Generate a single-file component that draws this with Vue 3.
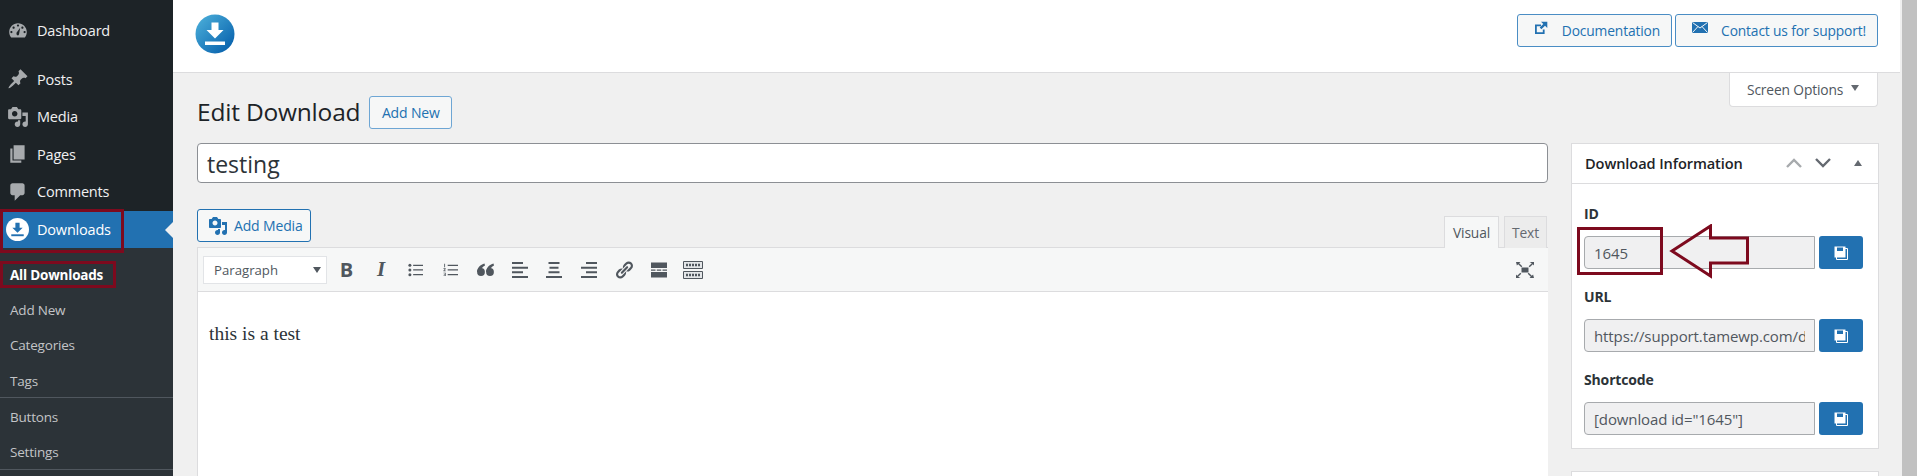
<script setup>
const topMenu = [
  { label: 'Posts', d: 'M10.44 3.02l1.82-1.82 6.36 6.35-1.83 1.82c-1.05-.68-2.48-.57-3.41.36l-.75.75c-.92.93-1.04 2.35-.35 3.41l-1.83 1.82-2.41-2.41-2.8 2.79c-.42.42-3.38 2.71-3.8 2.29s1.86-3.39 2.28-3.81l2.79-2.79L4.1 9.36l1.83-1.82c1.05.69 2.48.57 3.4-.36l.75-.75c.93-.92 1.05-2.35.36-3.41z' },
  { label: 'Media', d: 'M13 11V4c0-.55-.45-1-1-1h-1.67L9 1H5L3.67 3H2c-.55 0-1 .45-1 1v7c0 .55.45 1 1 1h10c.55 0 1-.45 1-1zM7 4.5c1.38 0 2.5 1.12 2.5 2.5S8.38 9.5 7 9.5 4.5 8.38 4.5 7 5.62 4.5 7 4.5zM14 6h5v10.5c0 1.38-1.12 2.5-2.5 2.5S14 17.88 14 16.5s1.12-2.5 2.5-2.5c.17 0 .34.02.5.05V9h-3V6zm-4 8.05V13h2v3.5c0 1.38-1.12 2.5-2.5 2.5S7 17.88 7 16.5 8.12 14 9.5 14c.17 0 .34.02.5.05z' },
  { label: 'Pages', d: 'M6 15V2h10v13H6zm-1 1h8v2H3V5h2v11z' },
  { label: 'Comments', d: 'M5 2h9c1.1 0 2 .9 2 2v7c0 1.1-.9 2-2 2h-2l-5 5v-5H5c-1.1 0-2-.9-2-2V4c0-1.1.9-2 2-2z' },
]
const dash = 'M3.76 16h12.48c1.1-1.37 1.76-3.11 1.76-5 0-4.42-3.58-8-8-8s-8 3.58-8 8c0 1.89.66 3.63 1.76 5zM10 4c.55 0 1 .45 1 1s-.45 1-1 1-1-.45-1-1 .45-1 1-1zM6 6c.55 0 1 .45 1 1s-.45 1-1 1-1-.45-1-1 .45-1 1-1zm8 0c.55 0 1 .45 1 1s-.45 1-1 1-1-.45-1-1 .45-1 1-1zm-5.37 5.55L12 7l-.97 5.55c0 .57-.46 1.45-1.03 1.45s-1.66-.43-1.37-2.45zM4 10c.55 0 1 .45 1 1s-.45 1-1 1-1-.45-1-1 .45-1 1-1zm12 0c.55 0 1 .45 1 1s-.45 1-1 1-1-.45-1-1 .45-1 1-1z'
const media = topMenu[1].d
const link = 'M17.74 2.76c1.68 1.69 1.68 4.41 0 6.1l-1.53 1.52c-1.12 1.12-2.7 1.47-4.14 1.09l2.62-2.61.76-.77.76-.76c.84-.84.84-2.2 0-3.04-.84-.85-2.2-.85-3.04 0l-.77.76-3.38 3.38c-.37-1.44-.02-3.02 1.1-4.14l1.52-1.53c1.69-1.68 4.42-1.68 6.1 0zM8.59 13.43l5.34-5.34c.42-.42.42-1.1 0-1.52-.44-.43-1.13-.39-1.53 0l-5.33 5.34c-.42.42-.42 1.1 0 1.52.44.43 1.13.39 1.52 0zm-.76 2.29l4.14-4.15c.38 1.44.03 3.02-1.09 4.14l-1.52 1.53c-1.69 1.68-4.41 1.68-6.1 0-1.68-1.68-1.68-4.42 0-6.1l1.53-1.52c1.12-1.12 2.7-1.47 4.14-1.1l-4.14 4.15c-.85.84-.85 2.2 0 3.05.84.84 2.2.84 3.04 0z'
const fields = [
  { label: 'ID', value: '1645' },
  { label: 'URL', value: 'https://support.tamewp.com/downloads/testing/' },
  { label: 'Shortcode', value: '[download id="1645"]' },
]
</script>

<template>
  <div class="root">
    <aside class="side">
      <a class="item first">
        <svg class="ico" viewBox="0 0 20 20"><path :d="dash" /></svg>Dashboard
      </a>
      <a v-for="m in topMenu" :key="m.label" class="item">
        <svg class="ico" viewBox="0 0 20 20"><path :d="m.d" /></svg>{{ m.label }}
      </a>
      <a class="item current">
        <svg class="ico" viewBox="0 0 24 24">
          <circle cx="12" cy="12" r="12" fill="#fff" />
          <path d="M9.8 5h4.4v5.2h3.2L12 15.4 6.6 10.2h3.2z" fill="#2271b1" />
          <path d="M5.5 17h13v2h-13z" fill="#2271b1" />
        </svg>Downloads
      </a>
      <div class="sub">
        <a class="subitem active">All Downloads</a>
        <a class="subitem">Add New</a>
        <a class="subitem">Categories</a>
        <a class="subitem">Tags</a>
        <div class="subline"></div>
        <a class="subitem">Buttons</a>
        <a class="subitem">Settings</a>
        <div class="subline"></div>
      </div>
      <div class="mark mark-dl"></div>
      <div class="mark mark-all"></div>
    </aside>

    <main class="main">
      <header class="top">
        <svg class="logo" viewBox="0 0 40 40">
          <defs>
            <linearGradient id="lg" x1="0" y1="0" x2="1" y2="1">
              <stop offset="0" stop-color="#4fb3dc" />
              <stop offset="1" stop-color="#0059a8" />
            </linearGradient>
          </defs>
          <circle cx="20" cy="20" r="19.5" fill="url(#lg)" />
          <path d="M16.5 8.5h7v7.5h5L20 24.5 11.5 16h5z" fill="#fff" />
          <path d="M10 27.5h20V31H10z" fill="#fff" />
        </svg>
        <div class="top-btns">
          <a class="btn top-btn doc">
            <svg class="top-ico" viewBox="0 0 14 14">
              <path d="M1 3.5h6v1.800H2.800v6h6V8.500h1.800V13H1z" fill="#2271b1" />
              <path d="M7 .7h6.300V7l-2.300-2.300-3.600 3.600-1.700-1.700 3.600-3.600z" fill="#2271b1" />
            </svg>
            Documentation
          </a>
          <a class="btn top-btn contact">
            <svg class="top-ico mail" viewBox="0 0 16 11">
              <path d="M0 0h16v11H0z" fill="#2271b1" />
              <path d="M.5.5 8 6l7.500-5.500M.5 10.500 6 4.500M15.500 10.500 10 4.500" fill="none" stroke="#f6f7f7" stroke-width="1" />
            </svg>
            Contact us for support!
          </a>
        </div>
      </header>
      <div class="screen-tab">Screen Options<i class="tri"></i></div>

      <div class="wrap">
        <div class="head-row">
          <h1 class="title">Edit Download</h1>
          <a class="btn add-new">Add New</a>
        </div>
        <div class="cols">
          <div class="left">
            <input class="title-input" value="testing" readonly />
            <div class="media-row">
              <a class="btn add-media">
                <svg class="media-ico" viewBox="0 0 20 20"><path :d="media" fill="#2271b1" /></svg>
                Add Media
              </a>
              <div class="tabs">
                <span class="tab on">Visual</span>
                <span class="tab">Text</span>
              </div>
            </div>
            <div class="editor">
              <div class="toolbar">
                <div class="select">Paragraph<i class="tri dark"></i></div>
                <span class="tb tb-b">B</span>
                <span class="tb tb-i">I</span>
                <span class="tb">
                  <svg viewBox="0 0 16 14" class="tbi"><circle cx="2" cy="2" r="1.6" /><circle cx="2" cy="7" r="1.6" /><circle cx="2" cy="12" r="1.6" /><path d="M5.500 1.300H16v1.300H5.500zM5.500 6.300H16v1.300H5.500zM5.500 11.300H16v1.300H5.500z" /></svg>
                </span>
                <span class="tb">
                  <svg viewBox="0 0 16 14" class="tbi"><path d="M1.300.4h.9v3.600h-.9zM.5 5h2.400v.8L1.500 7.500h1.400v.7H.5v-.8l1.400-1.600H.5zM.5 9.800h2.400v3.700H.5v-.7h1.500v-.8H.9v-.6h1.100v-.9H.5z" /><path d="M5 1.300h11v1.300H5zM5 6.300h11v1.300H5zM5 11.300h11v1.300H5z" /></svg>
                </span>
                <span class="tb">
                  <svg viewBox="0 0 17 13" class="tbi quote"><circle cx="4" cy="9" r="3.9" /><circle cx="13" cy="9" r="3.9" /><path d="M7.500.6C3.500 1.600.1 5 .1 9h3.400c0-2.500 1.600-5 4.500-6.500zM16.500.6C12.500 1.600 9.100 5 9.100 9h3.400c0-2.500 1.600-5 4.500-6.500z" /></svg>
                </span>
                <span class="tb">
                  <svg viewBox="0 0 16 16" class="tbi sq"><path d="M0 0h11v2H0zM0 4.700h16v2H0zM0 9.300h11v2H0zM0 14h16v2H0z" /></svg>
                </span>
                <span class="tb">
                  <svg viewBox="0 0 16 16" class="tbi sq"><path d="M2.500 0h11v2h-11zM2.500 9.300h11v2h-11zM3.500 4.700h9v2h-9zM0 14h16v2H0z" /></svg>
                </span>
                <span class="tb">
                  <svg viewBox="0 0 16 16" class="tbi sq"><path d="M5 0h11v2H5zM0 4.700h16v2H0zM5 9.300h11v2H5zM0 14h16v2H0z" /></svg>
                </span>
                <span class="tb">
                  <svg viewBox="0 0 20 20" class="tbi big"><path :d="link" /></svg>
                </span>
                <span class="tb">
                  <svg viewBox="0 0 16 15" class="tbi sq"><path d="M0 0h16v5.500H0zM0 6.900h4.500v1.300H0zM5.800 6.900h4.400v1.300H5.800zM11.500 6.900H16v1.300h-4.500zM0 9.500h16V15H0z" /></svg>
                </span>
                <span class="tb">
                  <svg viewBox="0 0 20 18" class="tbi wide">
                    <path d="M.5.500h19v7h-19zM.5 10.500h19v7h-19z" fill="#e3e6e8" stroke="#50575e" />
                    <path d="M3 4h14M3 14h14" fill="none" stroke="#50575e" stroke-width="2.500" stroke-dasharray="2 1" />
                  </svg>
                </span>
                <span class="tb tb-full">
                  <svg viewBox="0 0 18 16" class="tbi full">
                    <path d="M5.500 5.500h7v5h-7z" />
                    <path d="M0 0h4.500L3.200 1.300 6.300 4.300 5.300 5.200 2.200 2.200 .9 3.500zM18 0v3.500L16.800 2.200 13.700 5.200 12.700 4.300 15.800 1.300 13.500 0zM0 16v-3.500L1.200 13.800 4.300 10.800 5.300 11.700 2.200 14.700 4.500 16zM18 16h-4.500l1.300-1.300-3.100-3 1-.9 3.100 3 1.300-1.300z" />
                  </svg>
                </span>
              </div>
              <div class="content">this is a test</div>
            </div>
          </div>

          <div class="right">
            <section class="panel">
              <div class="panel-head">
                <span class="panel-title">Download Information</span>
                <svg class="chev" viewBox="0 0 16 10"><path d="M1 9l7-7 7 7" fill="none" stroke="#a7aaad" stroke-width="2.4" /></svg>
                <svg class="chev two" viewBox="0 0 16 10"><path d="M1 1l7 7 7-7" fill="none" stroke="#646970" stroke-width="2.4" /></svg>
                <i class="tri up"></i>
              </div>
              <div class="panel-body">
                <div v-for="f in fields" :key="f.label" class="field">
                  <label class="flabel">{{ f.label }}</label>
                  <div class="frow">
                    <input class="finput" :value="f.value" readonly />
                    <button class="save">
                      <svg viewBox="0 0 14 14" class="save-ico">
                        <path d="M2.500 2.500h11v11h-11z" fill="#2271b1" stroke="#fff" stroke-width="1" />
                        <path d="M.5.500h11v11H.5z" fill="#fff" />
                        <path d="M3 1.500h6v3.500H3z" fill="#2271b1" />
                      </svg>
                    </button>
                  </div>
                </div>
              </div>
            </section>
            <section class="panel next"></section>
          </div>
        </div>
      </div>

      <div class="mark mark-id"></div>
      <svg class="arrow" viewBox="0 0 84 56">
        <path d="M3 27 41.500 2v12h37v25h-37v13z" fill="none" stroke="#7d0a1e" stroke-width="3" />
      </svg>
    </main>

    <div class="gap"></div>
    <div class="scrollbar"></div>
  </div>
</template>

<style>
html, body { margin: 0; background: #f0f0f0; overflow: hidden; }
</style>

<style scoped>
.root {
  display: flex;
  width: 1917px;
  height: 476px;
  overflow: hidden;
  background: #f0f0f0;
  font-family: "Open Sans", "Noto Sans", sans-serif;
  color: #1d2327;
}
.side {
  position: relative;
  flex: 0 0 173px;
  background: #1d2327;
  padding-top: 12px;
  box-sizing: border-box;
}
.item {
  display: flex;
  align-items: center;
  height: 37.5px;
  padding-left: 7px;
  color: #f0f0f1;
  font-size: 14.5px;
  letter-spacing: -0.2px;
  position: relative;
}
.item.first { margin-bottom: 11px; }
.ico {
  width: 22px;
  height: 22px;
  margin-right: 8px;
  fill: #a7aaad;
  flex: none;
}
.item.current { background: #2271b1; color: #fff; padding-left: 6px; }
.item.current .ico { width: 23px; height: 23px; margin-right: 8px; }
.item.current::after {
  content: "";
  position: absolute;
  right: 0;
  top: 11px;
  border: 8px solid transparent;
  border-right-color: #f0f0f0;
  border-left-width: 0;
}
.sub {
  background: #2c3338;
  padding-top: 9.5px;
  height: 228px;
  box-sizing: border-box;
}
.subitem {
  display: flex;
  align-items: center;
  height: 35.2px;
  padding-left: 10px;
  color: #c3c4c7;
  font-size: 13.5px;
  letter-spacing: -0.2px;
}
.subitem.active { color: #fff; font-weight: 700; }
.subline { height: 1px; background: #50575e; margin-top: -1px; margin-bottom: 1px; }
.mark { position: absolute; box-sizing: border-box; border: 3px solid #7d0a1e; pointer-events: none; }
.mark-dl { left: 0; top: 209px; width: 124px; height: 44px; }
.mark-all { left: 0; top: 261px; width: 116px; height: 27px; }

.main { position: relative; flex: 0 0 1727px; min-width: 0; }
.top {
  display: flex;
  align-items: flex-start;
  justify-content: space-between;
  background: #fff;
  border-bottom: 1px solid #dcdcde;
  padding: 14px 22px 0 22px;
  box-sizing: border-box;
  height: 73px;
}
.logo { width: 40px; height: 40px; }
.top-btns { display: flex; gap: 3px; }
.btn {
  display: inline-flex;
  align-items: center;
  box-sizing: border-box;
  height: 33px;
  border: 1px solid #2271b1;
  border-radius: 3px;
  background: #f6f7f7;
  color: #2271b1;
  font-size: 14px;
  letter-spacing: -0.15px;
}
.top-btn { position: relative; justify-content: flex-end; padding-right: 11px; border-color: #4a8dc4; font-size: 13.8px; }
.doc { width: 155px; }
.contact { width: 203px; }
.top-ico { position: absolute; left: 16px; top: 6px; width: 14px; height: 14px; }
.top-ico.mail { width: 16px; height: 11px; top: 7px; }
.screen-tab {
  position: absolute;
  top: 73px;
  right: 22px;
  width: 149px;
  height: 34px;
  box-sizing: border-box;
  display: flex;
  align-items: center;
  padding-left: 17px;
  background: #fff;
  border: 1px solid #dcdcde;
  border-top: 0;
  border-radius: 0 0 4px 4px;
  color: #50575e;
  font-size: 13.8px;
  letter-spacing: -0.15px;
}
.tri {
  display: inline-block;
  width: 0;
  height: 0;
  border-left: 4.5px solid transparent;
  border-right: 4.5px solid transparent;
  border-top: 6px solid #646970;
  margin-left: 8px;
  margin-top: -3px;
}
.wrap { padding: 23px 0 0 24px; }
.head-row { display: flex; align-items: center; height: 33px; }
.title {
  margin: -2px 0 0 0;
  font-size: 24.5px;
  font-weight: 400;
  letter-spacing: -0.2px;
  color: #1d2327;
}
.add-new { margin-left: 9px; width: 83px; justify-content: center; border-color: #6ea6d4; }
.cols { display: flex; gap: 23px; margin-top: 14px; align-items: flex-start; }
.left { flex: 0 0 1351px; }
.title-input {
  display: block;
  width: 100%;
  height: 40px;
  box-sizing: border-box;
  border: 1px solid #8c8f94;
  border-radius: 4px;
  background: #fff;
  padding: 2px 9px 0;
  font: 400 23px "Open Sans", sans-serif;
  color: #2c3338;
  outline: none;
}
.media-row {
  display: flex;
  align-items: flex-end;
  justify-content: space-between;
  height: 38px;
  margin-top: 26px;
}
.add-media {
  width: 114px;
  padding-left: 10px;
  align-self: flex-start;
  gap: 6px;
}
.media-ico { width: 20px; height: 20px; }
.tabs { display: flex; gap: 5px; margin-right: 1px; }
.tab {
  display: flex;
  align-items: center;
  justify-content: center;
  box-sizing: border-box;
  height: 32px;
  width: 43px;
  border: 1px solid #dcdcde;
  border-bottom: 0;
  background: #ececec;
  color: #646970;
  font-size: 13.8px;
  letter-spacing: -0.15px;
  margin-bottom: -1px;
}
.tab.on { width: 55px; background: #f6f7f7; color: #50575e; position: relative; z-index: 1; }
.editor {
  border: 1px solid #dcdcde;
  border-right: 0;
  border-bottom: 0;
  background: #fff;
  height: 229px;
  box-sizing: border-box;
}
.toolbar {
  display: flex;
  align-items: center;
  height: 43px;
  padding-left: 5px;
  background: #f6f7f7;
  border-bottom: 1px solid #dcdcde;
}
.select {
  display: flex;
  align-items: center;
  justify-content: space-between;
  box-sizing: border-box;
  width: 124px;
  height: 28px;
  padding: 0 5px 0 10px;
  background: #fff;
  border: 1px solid #e2e4e7;
  margin-right: 2px;
  color: #50575e;
  font-size: 13.2px;
}
.tri.dark { border-top-color: #50575e; margin-top: 0; }
.tb {
  display: flex;
  align-items: center;
  justify-content: center;
  flex: 0 0 34.7px;
  height: 30px;
  color: #50575e;
}
.tb-b { font-size: 20px; font-weight: 700; }
.tb-i { font: italic 700 21px "Liberation Serif", serif; }
.tb-full { margin-left: auto; margin-right: 6px; }
.tbi { width: 15px; height: 14px; fill: #50575e; }
.tbi.sq { width: 16px; height: 16px; }
.tbi.quote { width: 17px; height: 13px; }
.tbi.big { width: 20px; height: 20px; }
.tbi.wide { width: 20px; height: 18px; }
.tbi.full { width: 18px; height: 16px; }
.content {
  padding: 27px 0 0 11px;
  font: 400 19.5px/30px "Liberation Serif", serif;
  color: #2c3338;
}

.right { flex: 0 0 308px; }
.panel {
  box-sizing: border-box;
  background: #fff;
  border: 1px solid #dcdcde;
}
.panel-head {
  display: flex;
  align-items: center;
  height: 40px;
  padding: 0 16px 0 13px;
  border-bottom: 1px solid #dcdcde;
  box-sizing: border-box;
}
.panel-title { flex: 1; margin-top: -2px; font-size: 14.6px; font-weight: 600; letter-spacing: -0.1px; }
.chev { width: 16px; height: 10px; margin-right: 13px; margin-top: -2px; }
.chev.two { margin-right: 23px; }
.tri.up {
  border-top: 0;
  border-bottom: 6px solid #646970;
  margin: -2px 0 0 0;
}
.panel-body { padding: 20px 15px 13px 12px; }
.field + .field { margin-top: 18px; }
.flabel { display: block; line-height: 20px; margin-bottom: 12px; font-size: 14px; font-weight: 700; color: #2c3338; letter-spacing: -0.15px; }
.frow { display: flex; gap: 4px; }
.finput {
  flex: 0 0 231px;
  width: 231px;
  height: 33px;
  box-sizing: border-box;
  padding: 0 9px;
  border: 1px solid #a7aaad;
  border-radius: 4px 0 0 4px;
  background: #f0f0f1;
  color: #50575e;
  font: 400 15px "Open Sans", sans-serif;
  letter-spacing: -0.1px;
  outline: none;
}
.save {
  flex: 0 0 44px;
  height: 33px;
  display: flex;
  align-items: center;
  justify-content: center;
  padding: 0;
  border: 0;
  border-radius: 3px;
  background: #2271b1;
}
.save-ico { width: 14px; height: 14px; }
.next { margin-top: 22px; height: 60px; }
.mark-id { left: 1404px; top: 227px; width: 86px; height: 48px; }
.arrow { position: absolute; left: 1496px; top: 224px; width: 84px; height: 56px; }

.gap { flex: 0 0 2px; }
.scrollbar { flex: 0 0 15px; background: #c1c1c1; }
</style>
